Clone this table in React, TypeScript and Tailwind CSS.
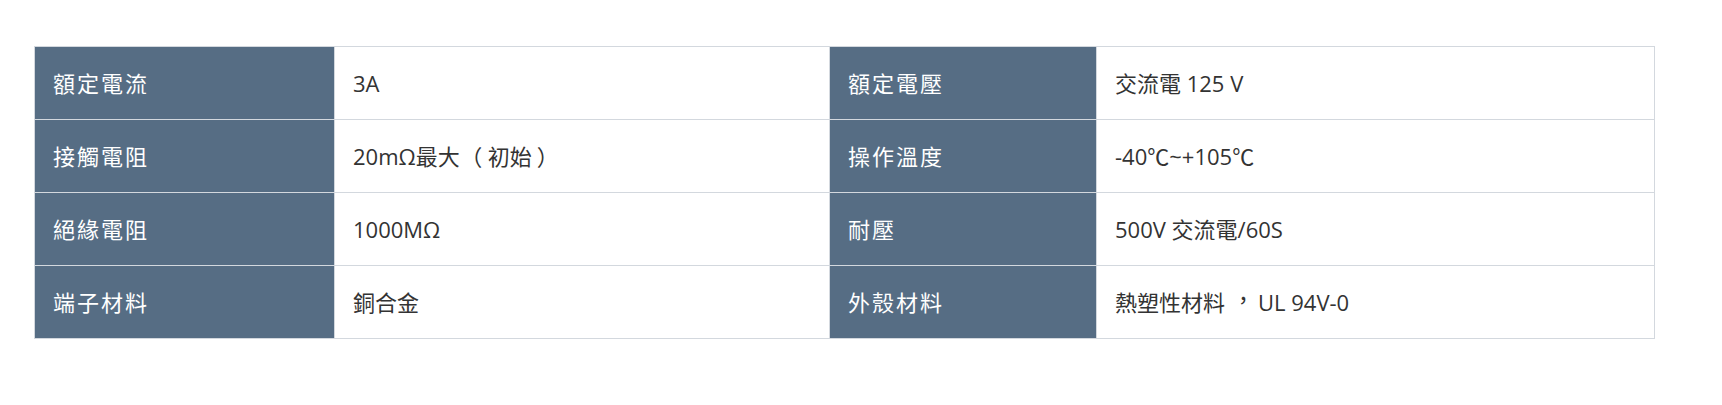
import React from "react";

interface Spec {
  label: string;
  value: string;
}

const rows: [Spec, Spec][] = [
  [
    { label: "額定電流", value: "3A" },
    { label: "額定電壓", value: "交流電 125 V" },
  ],
  [
    { label: "接觸電阻", value: "20mΩ最大（初始）" },
    { label: "操作溫度", value: "-40℃~+105℃" },
  ],
  [
    { label: "絕緣電阻", value: "1000MΩ" },
    { label: "耐壓", value: "500V 交流電/60S" },
  ],
  [
    { label: "端子材料", value: "銅合金" },
    { label: "外殼材料", value: "熱塑性材料，UL 94V-0" },
  ],
];

const font = {
  fontFamily: '"Open Sans", "Noto Sans CJK TC", sans-serif',
};

const renderValue = (text: string) =>
  text.split(/([（），])/).map((part, i) => {
    if (part === "（") {
      return (
        <span key={i} className="ml-[5px] mr-[1px] inline-block -translate-x-[0.2em]">
          {part}
        </span>
      );
    }
    if (part === "）") {
      return (
        <span key={i} className="ml-[2px] inline-block translate-x-[0.14em]">
          {part}
        </span>
      );
    }
    if (part === "，") {
      return (
        <span key={i} className="ml-[5px] mr-[6px] inline-block translate-x-[0.1em] -translate-y-[0.12em]">
          {part}
        </span>
      );
    }
    return <React.Fragment key={i}>{part}</React.Fragment>;
  });

const App = () => {
  return (
    <div lang="zh-Hant-TW" className="min-h-[405px] w-full bg-white pt-[46px] pl-[34px]" style={font}>
      <table className="w-[1620px] table-fixed border-collapse text-[22px]">
        <colgroup>
          <col className="w-[300px]" />
          <col className="w-[495px]" />
          <col className="w-[267px]" />
          <col className="w-[558px]" />
        </colgroup>
        <tbody>
          {rows.map((pair, i) => (
            <tr key={i} className="h-[73px]">
              {pair.map((spec) => (
                <React.Fragment key={spec.label}>
                  <th className="border border-[#d3d8de] bg-[#566d84] px-[18px] text-left font-normal tracking-[2px] text-white">
                    {spec.label}
                  </th>
                  <td className="border border-[#d3d8de] px-[18px] text-[#333333]">
                    {renderValue(spec.value)}
                  </td>
                </React.Fragment>
              ))}
            </tr>
          ))}
        </tbody>
      </table>
    </div>
  );
};

export default App;
